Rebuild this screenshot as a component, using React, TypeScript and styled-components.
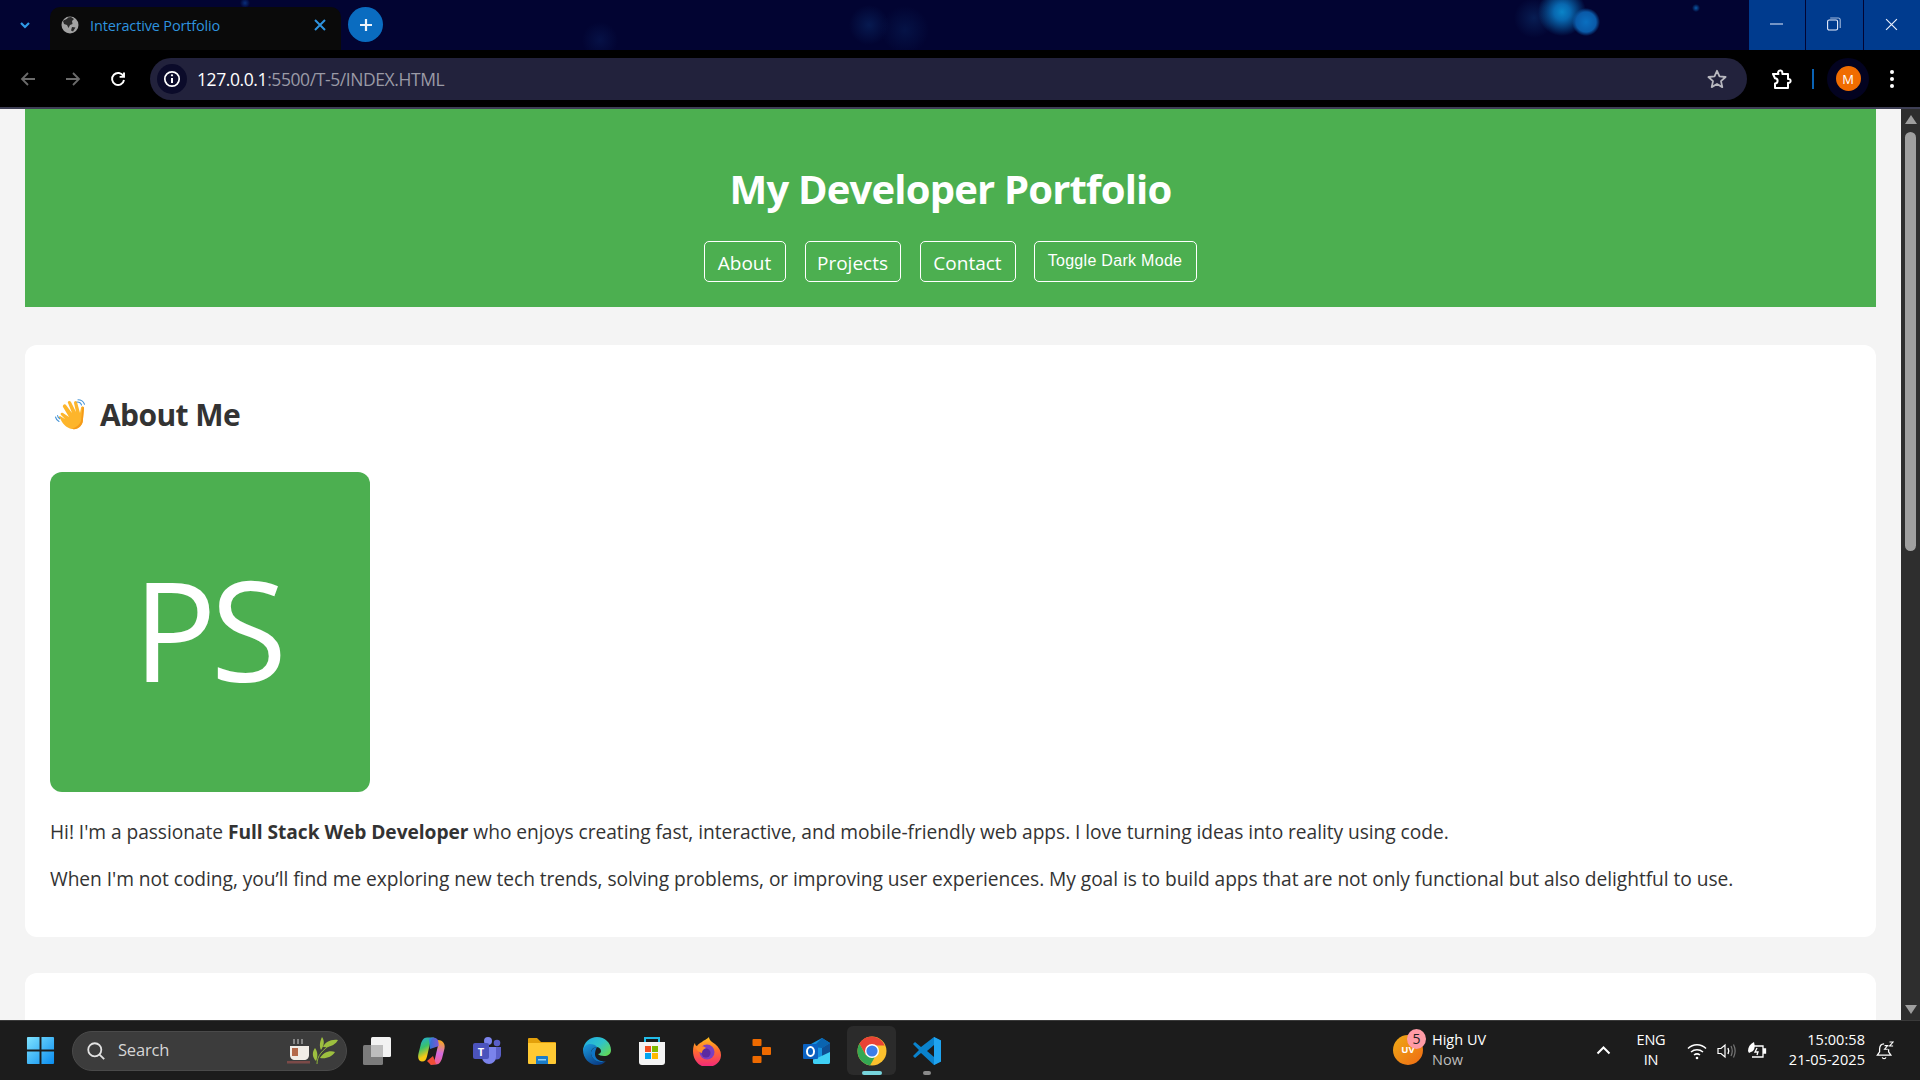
import React from "react";
import styled, { createGlobalStyle } from "styled-components";

const UI = `"Open Sans", "Noto Sans", "Liberation Sans", sans-serif`;

const Global = createGlobalStyle`
  html, body { margin: 0; padding: 0; height: 100%; overflow: hidden; background: #f4f4f4; }
  * { box-sizing: border-box; }
  #root { height: 100%; }
`;

const Screen = styled.div`
  width: 1920px; height: 1080px; display: flex; flex-direction: column; overflow: hidden;
  font-family: ${UI};
`;

/* ---- browser chrome ---- */
const TabStrip = styled.div`
  height: 50px; flex: none; display: flex; align-items: flex-end;
  background:
    radial-gradient(circle at 1586px 22px, #0a6fc0 0, #0a5aa8 10px, rgba(6,60,130,0) 14px),
    radial-gradient(circle at 1562px 12px, #0a84c8 0, #0868b0 8px, rgba(6,60,130,0) 24px),
    radial-gradient(circle at 1534px 18px, rgba(12,50,110,.55) 0, rgba(8,30,80,0) 20px),
    radial-gradient(circle at 1696px 8px, #0a5aa8 0, rgba(8,30,80,0) 4px),
    radial-gradient(circle at 869px 25px, rgba(10,40,100,.6) 0, rgba(8,30,80,0) 20px),
    radial-gradient(circle at 905px 30px, rgba(10,40,100,.4) 0, rgba(8,30,80,0) 24px),
    radial-gradient(circle at 600px 40px, rgba(10,30,90,.5) 0, rgba(8,30,80,0) 18px),
    radial-gradient(circle at 245px 3px, rgba(10,50,130,.9) 0, rgba(8,30,80,0) 5px),
    #020432;
`;
const TabMenu = styled.div`
  width: 50px; height: 50px; flex: none; display: flex; align-items: center; justify-content: center;
  color: #2f9be8;
`;
const Tab = styled.div`
  width: 291px; height: 43px; flex: none; background: #0a0a0a; border-radius: 10px 10px 0 0;
  display: flex; align-items: center; padding: 0 15px 7px 11px; gap: 11px;
`;
const TabTitle = styled.span`
  flex: 1; color: #2e93df; font-size: 14.5px; letter-spacing: -0.15px; white-space: nowrap;
`;
const TabClose = styled.span`color: #2e93df; display: flex;`;
const NewTab = styled.div`
  width: 35px; height: 35px; margin: 0 0 8px 7px; border-radius: 50%; background: #0a6cc0;
  display: flex; align-items: center; justify-content: center; color: #eef4fa; flex: none;
`;
const Spacer = styled.div`flex: 1;`;
const WinButtons = styled.div`display: flex; align-self: stretch; gap: 1px; width: 171px;`;
const WinButton = styled.div`
  flex: 1; height: 50px; padding-bottom: 2px; background: #003b8e; display: flex; align-items: center; justify-content: center;
  color: #e8eefc;
`;

const Toolbar = styled.div`
  height: 57px; flex: none; background: #000; display: flex; align-items: center; padding-left: 5px;
`;
const Rule = styled.div`height: 2px; flex: none; background: #3e3f55;`;
const NavIcon = styled.div<{ $dim?: boolean }>`
  width: 45px; height: 40px; flex: none; display: flex; align-items: center; justify-content: center;
  color: ${(p) => (p.$dim ? "#6b6b6b" : "#fff")};
`;
const Omnibox = styled.div`
  width: 1597px; height: 42px; margin-left: 10px; background: #22223c; border-radius: 21px; flex: none;
  display: flex; align-items: center; padding: 0 20px 0 7px;
`;
const InfoChip = styled.div`
  width: 30px; height: 30px; border-radius: 50%; background: #0b0b2a; color: #fff; flex: none;
  display: flex; align-items: center; justify-content: center;
`;
const Url = styled.div`
  flex: 1; margin-left: 10px; font-size: 17.5px; letter-spacing: -0.41px; color: #9a9aa6; white-space: nowrap;
`;
const UrlHost = styled.span`color: #fff;`;
const ToolIcons = styled.div`display: flex; align-items: center; flex: 1; padding-left: 24px;`;
const Divider = styled.div`width: 2px; height: 20px; background: #0a62b4; margin: 0 13px 0 19px;`;
const ProfileRing = styled.div`
  width: 42px; height: 42px; border-radius: 50%; background: #030320; display: flex; align-items: center; justify-content: center;
`;
const Profile = styled.div`
  width: 25px; height: 25px; border-radius: 50%; background: #f06c00; color: #fff; font-size: 13px;
  display: flex; align-items: center; justify-content: center;
`;
const Kebab = styled.div`margin-left: 20px; color: #fff; display: flex;`;

/* ---- page ---- */
const Viewport = styled.div`flex: 1; min-height: 0; display: flex; overflow: hidden;`;
const Page = styled.main`
  flex: 1; min-width: 0; background: #f4f4f4; padding: 0 25px; overflow: hidden; color: #333;
`;
const Header = styled.header`
  height: 198px; background: #4caf50; color: #fff; text-align: center; padding-top: 55px; margin-bottom: 38px;
`;
const Title = styled.h1`
  margin: 0 0 27px; font-size: 40px; line-height: 50px; font-weight: 700; letter-spacing: -0.82px;
`;
const Nav = styled.nav`display: flex; justify-content: center; gap: 19px; padding-right: 1px;`;
const NavLink = styled.a<{ $w: number }>`
  height: 41px; border: 1px solid #fff; border-radius: 5px; color: #fff; font-size: 19px; padding-top: 2px;
  letter-spacing: 0; display: flex; align-items: center; justify-content: center;
  width: ${(p) => p.$w}px;
`;
const ToggleBtn = styled.button`
  width: 163px; height: 41px; margin-left: -1px; border: 1px solid #fff; border-radius: 5px; background: transparent; color: #fff;
  font-family: "Liberation Sans", Arial, sans-serif; font-size: 16px; letter-spacing: 0.3px; padding: 0 0 2px;
`;
const Card = styled.section<{ $h: number }>`
  background: #fff; border-radius: 12px; padding: 45px 25px 0; margin-bottom: 36px;
  height: ${(p) => p.$h}px;
`;
const Heading = styled.h2`
  margin: 0 0 32px; height: 50px; padding-left: 4px; font-size: 30px; line-height: 50px; font-weight: 700; letter-spacing: -0.6px;
  display: flex; align-items: center; gap: 13px; color: #333;
`;
const Avatar = styled.div`
  width: 320px; height: 320px; border-radius: 12px; background: #4caf50; color: #fff; padding: 0 6px 7px 0;
  display: flex; align-items: center; justify-content: center; font-size: 139px; letter-spacing: -6px; line-height: 1;
  margin-bottom: 26px;
`;
const Para = styled.p`
  margin: 0 0 19px; font-size: 19.2px; line-height: 28px; letter-spacing: -0.055px; color: #333; white-space: nowrap;
`;
const Strong = styled.strong`font-weight: 700;`;

const Scrollbar = styled.div`
  width: 19px; flex: none; background: #2e2e2e; display: flex; flex-direction: column; align-items: center; padding: 6px 0;
`;
const Arrow = styled.div<{ $down?: boolean }>`
  width: 0; height: 0; flex: none; border-left: 6.5px solid transparent; border-right: 6.5px solid transparent;
  ${(p) => (p.$down ? "border-top: 9px solid #9e9e9e;" : "border-bottom: 9px solid #9e9e9e;")}
`;
const Thumb = styled.div`width: 11px; height: 419px; border-radius: 6px; background: #9f9f9f; margin-top: 8px;`;

/* ---- taskbar ---- */
const Taskbar = styled.footer`
  height: 60px; flex: none; background: #1c1c1c; border-top: 1px solid #3a3a3a; display: flex; align-items: center; padding-left: 26px;
`;
const SearchBox = styled.div`
  width: 275px; height: 40px; margin-left: 17px; border-radius: 20px; background: #3c3c3c; border: 1px solid #4a4a4a; flex: none;
  display: flex; align-items: center; padding: 0 7px 0 14px; color: #d6d6d6; font-size: 16.5px; letter-spacing: -0.2px;
`;
const SearchLabel = styled.span`flex: 1; margin-left: 13px; padding-bottom: 2px;`;
const Apps = styled.div`display: flex; align-items: center; margin-left: 2px;`;
const AppSlot = styled.div`
  width: 55px; height: 49px; flex: none; display: flex; align-items: center; justify-content: center; position: relative;
`;
const ActiveSlot = styled(AppSlot)`
  width: 49px; margin: 0 3px; background: #2b2b2b; border-radius: 6px;
`;
const Pill = styled.div<{ $w: number; $c: string }>`
  position: absolute; bottom: 0; left: 50%; transform: translateX(-50%); height: 4px; border-radius: 2px;
  width: ${(p) => p.$w}px; background: ${(p) => p.$c};
`;
const Weather = styled.div`
  width: 203px; margin-left: auto; padding-bottom: 2px; display: flex; align-items: center; gap: 9px; flex: none;
`;
const UvDot = styled.div`
  width: 30px; height: 30px; border-radius: 50%; background: linear-gradient(135deg, #eeab16, #ef6a14); color: #fff;
  font-size: 9.5px; font-weight: 700; display: flex; align-items: center; justify-content: center; position: relative;
`;
const UvBadge = styled.span`
  position: absolute; left: 14px; top: -6px; width: 19px; height: 20px; border-radius: 50%; background: #ff9ba6; color: #222;
  font-size: 14px; font-weight: 400; display: flex; align-items: center; justify-content: center;
`;
const WeatherText = styled.div`
  display: flex; flex-direction: column; font-size: 14.5px; line-height: 20px; color: #fff; letter-spacing: 0;
`;
const WeatherSub = styled.span`color: #bdbdbd;`;
const Tray = styled.div`
  width: 324px; flex: none; display: flex; align-items: center; color: #fff;
`;
const Lang = styled.div`
  width: 40px; margin: 0 1px 2px 20px; text-align: center; font-size: 14.5px; line-height: 20px; letter-spacing: -0.2px; color: #fff;
`;
const TrayIcons = styled.div`display: flex; align-items: center; gap: 10px; margin-left: 15px;`;
const Clock = styled.div`
  width: 90px; margin: 0 0 2px 8px; text-align: right; font-size: 14.5px; line-height: 20px; letter-spacing: 0.05px; color: #fff;
`;
const Bell = styled.div`margin-left: 11px; display: flex; color: #fff;`;

/* ---- icons ---- */
const Chevron = () => (
  <svg width="14" height="14" viewBox="0 0 14 14" fill="none" stroke="currentColor" strokeWidth="2.2"><path d="M3 5l4 4 4-4" /></svg>
);
const Globe = () => (
  <svg width="18" height="18" viewBox="0 0 18 18">
    <circle cx="9" cy="9" r="8.5" fill="#a3a3a3" />
    <path d="M7 1.500c-1 2-3.500 2-5 3.500l1 3 3 1 1.500 3L9 9l2.500-1L11 5l2-2-3-2zM11 11l3.500.5-2.500 4-2-1z" fill="#2a2a2a" />
  </svg>
);
const Plus = ({ s = 18 }: { s?: number }) => (
  <svg width={s} height={s} viewBox="0 0 18 18" stroke="currentColor" strokeWidth="2.2"><path d="M9 3v12M3 9h12" /></svg>
);
const Cross = ({ s = 12, w = 2 }: { s?: number; w?: number }) => (
  <svg width={s} height={s} viewBox="0 0 12 12" stroke="currentColor" strokeWidth={w} fill="none"><path d="M1 1l10 10M11 1L1 11" /></svg>
);
const BackArrow = ({ flip }: { flip?: boolean }) => (
  <svg width="16" height="16" viewBox="0 0 16 16" fill="none" stroke="currentColor" strokeWidth="1.8" style={flip ? { transform: "scaleX(-1)" } : undefined}>
    <path d="M15 8H2M8 2L2 8l6 6" />
  </svg>
);
const Reload = () => (
  <svg width="16" height="16" viewBox="0 0 16 16" fill="none" stroke="currentColor" strokeWidth="1.9">
    <path d="M13.4 5.2A6 6 0 1 0 14 9" />
    <path d="M14 1.500v4.400H9.600" />
  </svg>
);
const Info = () => (
  <svg width="18" height="18" viewBox="0 0 18 18" fill="none" stroke="currentColor" strokeWidth="1.7">
    <circle cx="9" cy="9" r="7.2" />
    <path d="M9 8v5" strokeWidth="2" />
    <circle cx="9" cy="5.3" r="1.1" fill="currentColor" stroke="none" />
  </svg>
);
const Star = () => (
  <svg width="20" height="20" viewBox="0 0 20 20" fill="none" stroke="#b8b8bf" strokeWidth="1.8" strokeLinejoin="round">
    <path d="M10 1.800l2.500 5.600 6.100.6-4.600 4.100 1.300 6-5.300-3.100-5.300 3.100 1.300-6L1.400 8l6.100-.6z" />
  </svg>
);
const Puzzle = () => (
  <svg width="22" height="22" viewBox="0 0 22 22" fill="none" stroke="#fff" strokeWidth="2" strokeLinejoin="round">
    <path d="M2 6h5.500a2 2 0 0 1 3.600-2.600L11.500 6H17v5a2 2 0 1 1 0 3.800V20H4v-4.600a2.600 2.600 0 0 0 0-5.200L2 6z" />
  </svg>
);
const Dots = () => (
  <svg width="6" height="20" viewBox="0 0 6 20" fill="currentColor"><circle cx="3" cy="3" r="2" /><circle cx="3" cy="10" r="2" /><circle cx="3" cy="17" r="2" /></svg>
);
const Minimize = () => <svg width="14" height="14" viewBox="0 0 14 14" stroke="currentColor" strokeWidth="1"><path d="M0 7h13" /></svg>;
const Restore = () => (
  <svg width="14" height="14" viewBox="0 0 14 14" fill="none" stroke="currentColor" strokeWidth="1.1">
    <rect x="0.6" y="3" width="10" height="10" rx="1.6" />
    <path d="M3.200 1h8a2 2 0 0 1 2 2v8" opacity=".7" />
  </svg>
);
const WaveHand = () => (
  <svg width="33" height="32" viewBox="0 0 33 32">
    <path d="M6 19c2 5 6 10 12 11 7 1 11-4 11-10l1-11c0-2-3-2-3 0l-1 5-3-11c-1-2-3-1-3 1l2 9-5-10c-1-2-4-1-3 1l4 10-6-8c-1-2-4 0-3 2l6 10-6-4c-2-1-3 1-2 2l4 4-5-3c-1 0-1 1-1 2z" fill="#fdb52b" />
    <path d="M18 30c7 1 11-4 11-10l1-11c0-1-1-1-1.500-1.500L27 22c-1 3-4 6-9 8z" fill="#f59a1a" />
    <g fill="none" stroke="#4a96d6" strokeWidth="1.1" strokeLinecap="round">
      <path d="M23 3c2 0 4 1 4.500 3M24 .8c3 0 5.500 2 6.500 4.500" />
      <path d="M1.500 18c.5 2 1.500 3.500 3.500 4.500M3.500 16.500c.2 1.500 1 2.500 2.300 3.300" />
    </g>
  </svg>
);

const WinLogo = () => (
  <svg width="29" height="29" viewBox="0 0 30 30">
    <defs><linearGradient id="wl" x1="0" y1="0" x2="1" y2="1"><stop offset="0" stopColor="#7fe3ff" /><stop offset="1" stopColor="#0a8df0" /></linearGradient></defs>
    <path d="M1 2a1 1 0 0 1 1-1h12v13H1zM16 1h12a1 1 0 0 1 1 1v12H16zM1 16h13v13H2a1 1 0 0 1-1-1zM16 16h13v12a1 1 0 0 1-1 1H16z" fill="url(#wl)" />
  </svg>
);
const SearchGlyph = () => (
  <svg width="18" height="18" viewBox="0 0 22 22" fill="none" stroke="#e2e2e2" strokeWidth="2.2"><circle cx="9.500" cy="9.500" r="8" /><path d="M15 15l6 6" /></svg>
);
const TeaLeaf = () => (
  <svg width="52" height="27" viewBox="0 0 52 27">
    <path d="M3 9h19v9c0 3-2 5-5 5H8c-3 0-5-2-5-5z" fill="#f1ece6" />
    <path d="M5 11h6v8H5z" fill="#b4694a" />
    <rect x="0" y="24" width="23" height="2.5" fill="#7b4a48" />
    <path d="M7 2v5M11 2v5M15 2v5" stroke="#cfcfcf" strokeWidth="1" />
    <path d="M30 27c0-8 5-14 16-21" stroke="#8fb43a" strokeWidth="1" fill="none" />
    <path d="M29 24c-4-4-4-9-1-13 3 4 3 9 1 13zM34 13c-2-4-1-9 1-13 3 4 2 9-1 13zM36 10c2-5 8-8 15-7-2 4-8 8-15 7zM33 21c3-5 9-8 15-6-3 5-9 7-15 6z" fill="#9dbf3f" />
  </svg>
);
const TaskView = () => (
  <svg width="30" height="30" viewBox="0 0 30 30">
    <rect x="9" y="1" width="20" height="20" rx="1.5" fill="#f2f2f2" />
    <rect x="1" y="9" width="20" height="20" rx="1.5" fill="#7b7b7b" />
    <rect x="9" y="9" width="12" height="12" fill="#bdbdbd" />
  </svg>
);
const Copilot = () => (
  <svg width="30" height="30" viewBox="0 0 30 30">
    <defs>
      <linearGradient id="cp1" x1="0" y1="0" x2="0.4" y2="1"><stop offset="0" stopColor="#20a8e8" /><stop offset=".45" stopColor="#39c26a" /><stop offset=".8" stopColor="#f6c915" /></linearGradient>
      <linearGradient id="cp2" x1="0.6" y1="0" x2="0.4" y2="1"><stop offset="0" stopColor="#f5a81c" /><stop offset=".5" stopColor="#d46ae0" /><stop offset="1" stopColor="#f25c8b" /></linearGradient>
      <linearGradient id="cp3" x1="0" y1="0" x2="1" y2="0"><stop offset="0" stopColor="#2b7de8" /><stop offset="1" stopColor="#8a5fe8" /></linearGradient>
    </defs>
    <path d="M10 1.500h9c-4 0-5 2-6 6l-3 13c-.7 3-2 5-5 5-3.500 0-4.500-4-3.500-8l2-8C4.500 5 6.500 1.500 10 1.500z" fill="url(#cp1)" />
    <path d="M21 4c4 0 7.500 3 6.500 8.500l-2 8C24.500 25 22.500 28.500 19 28.500h-7c3 0 5-2.500 6-6l3-13c.3-2 0-4 0-5.500z" fill="url(#cp2)" />
    <path d="M12 3c3-2 6-2 9 1l1 6-9 3z" fill="url(#cp3)" opacity=".9" />
    <path d="M10 25l6-5 3 8-5 1z" fill="#f04e36" />
  </svg>
);
const Teams = () => (
  <svg width="30" height="30" viewBox="0 0 30 30">
    <circle cx="25" cy="7" r="3.3" fill="#5a5fc8" />
    <circle cx="16" cy="5" r="4" fill="#7b83eb" />
    <path d="M20 11h9v8a4.500 4.500 0 0 1-9 0z" fill="#5a5fc8" />
    <path d="M10 11h14v10a7 7 0 0 1-14 0z" fill="#7b83eb" />
    <rect x="1" y="7" width="16" height="16" rx="2" fill="#4b53bc" />
    <text x="9" y="20" textAnchor="middle" fontFamily="Open Sans, sans-serif" fontWeight="700" fontSize="11" fill="#fff">T</text>
  </svg>
);
const Folder = () => (
  <svg width="30" height="30" viewBox="0 0 30 30">
    <path d="M1 3a1 1 0 0 1 1-1h8l4 4h14a1 1 0 0 1 1 1v4H1z" fill="#e3a00b" />
    <path d="M1 7h28v20a1 1 0 0 1-1 1H2a1 1 0 0 1-1-1z" fill="#ffc933" />
    <path d="M9 21a1 1 0 0 1 1-1h10a1 1 0 0 1 1 1v7H9z" fill="#1b7cc8" />
    <rect x="11" y="23" width="8" height="1.5" fill="#8fd0f5" />
  </svg>
);
const Edge = () => (
  <svg width="30" height="30" viewBox="0 0 30 30">
    <defs>
      <linearGradient id="ed1" x1="0" y1="0" x2="1" y2="0.8"><stop offset="0" stopColor="#1fa9e4" /><stop offset=".55" stopColor="#2fc3ca" /><stop offset="1" stopColor="#62d856" /></linearGradient>
      <linearGradient id="ed2" x1="0" y1="0" x2="0.6" y2="1"><stop offset="0" stopColor="#1b9de0" /><stop offset="1" stopColor="#0a3f88" /></linearGradient>
    </defs>
    <path d="M1 14C2 6 8 1 15 1c8 0 14 6 14 13 0 4-3 6-7 6-3 0-5-1-6-2 2 0 3-2 3-3 0-2-2-4-5-4-4 0-6 3-6 6z" fill="url(#ed1)" />
    <path d="M1 14c1-4 4-6 7-6 3 0 6 1 7 3-4 0-6 3-6 6 0 5 5 9 10 9 2 0 3 0 5-1-3 3-6 4-9 4C7 29 1 22 1 14z" fill="url(#ed2)" />
    <path d="M9 17c0 5 5 9 10 9 1.500 0 3-.3 4-1-5 1-10-2-10-7 0-3 1-5 2-7-3 0-6 3-6 6z" fill="#0f76c6" />
  </svg>
);
const Store = () => (
  <svg width="30" height="30" viewBox="0 0 30 30">
    <path d="M8 6V2h14v4" fill="none" stroke="#22bce8" strokeWidth="2" />
    <path d="M2 6h26v20a3 3 0 0 1-3 3H5a3 3 0 0 1-3-3z" fill="#f4f4f4" />
    <rect x="8" y="10" width="6" height="6" fill="#f25022" />
    <rect x="15" y="10" width="6" height="6" fill="#7fba00" />
    <rect x="8" y="17" width="6" height="6" fill="#00a4ef" />
    <rect x="15" y="17" width="6" height="6" fill="#ffb900" />
  </svg>
);
const Firefox = () => (
  <svg width="30" height="30" viewBox="0 0 30 30">
    <defs>
      <linearGradient id="ff" x1="0" y1="0" x2="0" y2="1"><stop offset="0" stopColor="#ffc21d" /><stop offset=".45" stopColor="#ff6d2e" /><stop offset="1" stopColor="#f2267c" /></linearGradient>
    </defs>
    <path d="M1 15C1 11 2 8 3 7c0 2 1 3 2 3 1-2 3-3 5-4 2-2 4-2 7-5 0 3 3 5 6 7 4 3 6 7 6 11 0 7-6 12-14 12S1 24 1 15z" fill="url(#ff)" />
    <circle cx="15" cy="16" r="7.5" fill="#7a3fc0" />
    <circle cx="14" cy="17" r="4.5" fill="#5a2aa0" />
    <path d="M4 12c3-3 8-2 10 0-2 1-4 2-4 5-3-1-5-2-6-5z" fill="#ff8c2a" />
  </svg>
);
const OrangeBlocks = () => (
  <svg width="20" height="24" viewBox="0 0 20 24" fill="#ee6a00">
    <rect x="0.5" y="0" width="9" height="7" rx="1" />
    <rect x="10" y="8" width="9" height="8" rx="1" />
    <rect x="0.5" y="17" width="9" height="7" rx="1" />
  </svg>
);
const Outlook = () => (
  <svg width="30" height="30" viewBox="0 0 30 30">
    <path d="M9 8l11-6 8 5v19a2 2 0 0 1-2 2H13a2 2 0 0 1-2-2v-3H9z" fill="#1490df" />
    <path d="M20 2l8 5-8 5-9-1z" fill="#0a64b0" />
    <path d="M20 12l8-5v10l-8 4z" fill="#0e4f94" />
    <path d="M11 24l17-8v10a2 2 0 0 1-2 2H13a2 2 0 0 1-2-2z" fill="#3fd0f5" />
    <rect x="1" y="8" width="15" height="15" rx="1" fill="#0a62c2" />
    <ellipse cx="8.5" cy="15.5" rx="3.5" ry="4.5" fill="none" stroke="#fff" strokeWidth="2" />
  </svg>
);
const Chrome = () => (
  <svg width="30" height="30" viewBox="0 0 30 30">
    <circle cx="15" cy="15" r="14.5" fill="#fbc02d" />
    <path d="M15 .5A14.500 14.500 0 0 0 2.400 7.800L8.700 19 15 9.500h12.600A14.500 14.500 0 0 0 15 .5z" fill="#ea4335" />
    <path d="M2.400 7.800A14.500 14.500 0 0 0 13 29.400L19 19l-10.300 0z" fill="#34a853" />
    <circle cx="15" cy="15" r="7" fill="#fff" />
    <circle cx="15" cy="15" r="5.6" fill="#3b7de8" />
  </svg>
);
const VSCode = () => (
  <svg width="30" height="30" viewBox="0 0 30 30">
    <path d="M22 1l7 3.500v21L22 29 9 17l-6 5-2-2 6-6-6-6 2-2 6 5z" fill="#0a82cc" />
    <path d="M22 1l7 3.500v21L22 29z" fill="#1fa3ef" />
    <path d="M22 9v12l-7-6z" fill="#1c1c1c" />
  </svg>
);
const Caret = () => (
  <svg width="15" height="15" viewBox="0 0 15 15" fill="none" stroke="#fff" strokeWidth="2"><path d="M1.500 10.500l6-6 6 6" /></svg>
);
const Wifi = () => (
  <svg width="20" height="18" viewBox="0 0 20 18" fill="none" stroke="#fff" strokeWidth="1.5">
    <path d="M1 6.500c5-5 13-5 18 0M4 10c3.500-3 8.500-3 12 0M7 13c2-1.500 4-1.500 6 0" />
    <circle cx="10" cy="16" r="1.3" fill="#fff" stroke="none" />
  </svg>
);
const Speaker = () => (
  <svg width="20" height="18" viewBox="0 0 20 18" fill="none" stroke="#fff" strokeWidth="1.2">
    <path d="M1 6.500h3L8 3v12l-4-3.500H1z" />
    <path d="M11 6c1 2 1 4 0 6" strokeWidth="1.4" />
    <path d="M14 4c1.500 3 1.500 7 0 10M16.500 2.500c2 4 2 9 0 13" stroke="#777" />
  </svg>
);
const Battery = () => (
  <svg width="20" height="20" viewBox="0 0 20 20" fill="none" stroke="#fff" strokeWidth="1.3">
    <path d="M6 5h10v11H5" />
    <path d="M16 8h2.500v4H16" fill="#fff" />
    <path d="M1 10c0-4 2-7 6-9 1 4 1 7-1 9-1 1-3 1-4 2z" fill="#fff" stroke="none" />
    <path d="M10 7l-2 4h3l-1 3" />
  </svg>
);
const SleepBell = () => (
  <svg width="18" height="20" viewBox="0 0 20 22" fill="none" stroke="#fff" strokeWidth="1.4">
    <path d="M9 3c-4 0-5 3-5 6v3l-2.500 3.500h15L14 12V9" />
    <path d="M7 18c.5 2 3.500 2 4 0" />
    <path d="M9.500 5h3.500l-3.500 4H13M15 1h4l-4 4.500h4" strokeWidth="1.2" />
  </svg>
);

export default function App() {
  return (
    <Screen>
      <Global />
      <TabStrip>
        <TabMenu><Chevron /></TabMenu>
        <Tab>
          <Globe />
          <TabTitle>Interactive Portfolio</TabTitle>
          <TabClose><Cross /></TabClose>
        </Tab>
        <NewTab><Plus /></NewTab>
        <Spacer />
        <WinButtons>
          <WinButton><Minimize /></WinButton>
          <WinButton><Restore /></WinButton>
          <WinButton><Cross s={13} w={1.1} /></WinButton>
        </WinButtons>
      </TabStrip>
      <Toolbar>
        <NavIcon $dim><BackArrow /></NavIcon>
        <NavIcon $dim><BackArrow flip /></NavIcon>
        <NavIcon><Reload /></NavIcon>
        <Omnibox>
          <InfoChip><Info /></InfoChip>
          <Url><UrlHost>127.0.0.1</UrlHost>:5500/T-5/INDEX.HTML</Url>
          <Star />
        </Omnibox>
        <ToolIcons>
          <Puzzle />
          <Divider />
          <ProfileRing><Profile>M</Profile></ProfileRing>
          <Kebab><Dots /></Kebab>
        </ToolIcons>
      </Toolbar>
      <Rule />
      <Viewport>
        <Page>
          <Header>
            <Title>My Developer Portfolio</Title>
            <Nav>
              <NavLink $w={82}>About</NavLink>
              <NavLink $w={96}>Projects</NavLink>
              <NavLink $w={96}>Contact</NavLink>
              <ToggleBtn>Toggle Dark Mode</ToggleBtn>
            </Nav>
          </Header>
          <Card $h={592}>
            <Heading><WaveHand />About Me</Heading>
            <Avatar>PS</Avatar>
            <Para>Hi! I'm a passionate <Strong>Full Stack Web Developer</Strong> who enjoys creating fast, interactive, and mobile-friendly web apps. I love turning ideas into reality using code.</Para>
            <Para>When I'm not coding, you’ll find me exploring new tech trends, solving problems, or improving user experiences. My goal is to build apps that are not only functional but also delightful to use.</Para>
          </Card>
          <Card $h={200} />
        </Page>
        <Scrollbar>
          <Arrow />
          <Thumb />
          <Spacer />
          <Arrow $down />
        </Scrollbar>
      </Viewport>
      <Taskbar>
        <WinLogo />
        <SearchBox>
          <SearchGlyph />
          <SearchLabel>Search</SearchLabel>
          <TeaLeaf />
        </SearchBox>
        <Apps>
          <AppSlot><TaskView /></AppSlot>
          <AppSlot><Copilot /></AppSlot>
          <AppSlot><Teams /></AppSlot>
          <AppSlot><Folder /></AppSlot>
          <AppSlot><Edge /></AppSlot>
          <AppSlot><Store /></AppSlot>
          <AppSlot><Firefox /></AppSlot>
          <AppSlot><OrangeBlocks /></AppSlot>
          <AppSlot><Outlook /></AppSlot>
          <ActiveSlot><Chrome /><Pill $w={20} $c="#76d4dc" /></ActiveSlot>
          <AppSlot><VSCode /><Pill $w={8} $c="#8a8a8a" /></AppSlot>
        </Apps>
        <Weather>
          <UvDot>UV<UvBadge>5</UvBadge></UvDot>
          <WeatherText>High UV<WeatherSub>Now</WeatherSub></WeatherText>
        </Weather>
        <Tray>
          <Caret />
          <Lang>ENG<br />IN</Lang>
          <TrayIcons><Wifi /><Speaker /><Battery /></TrayIcons>
          <Clock>15:00:58<br />21-05-2025</Clock>
          <Bell><SleepBell /></Bell>
        </Tray>
      </Taskbar>
    </Screen>
  );
}
